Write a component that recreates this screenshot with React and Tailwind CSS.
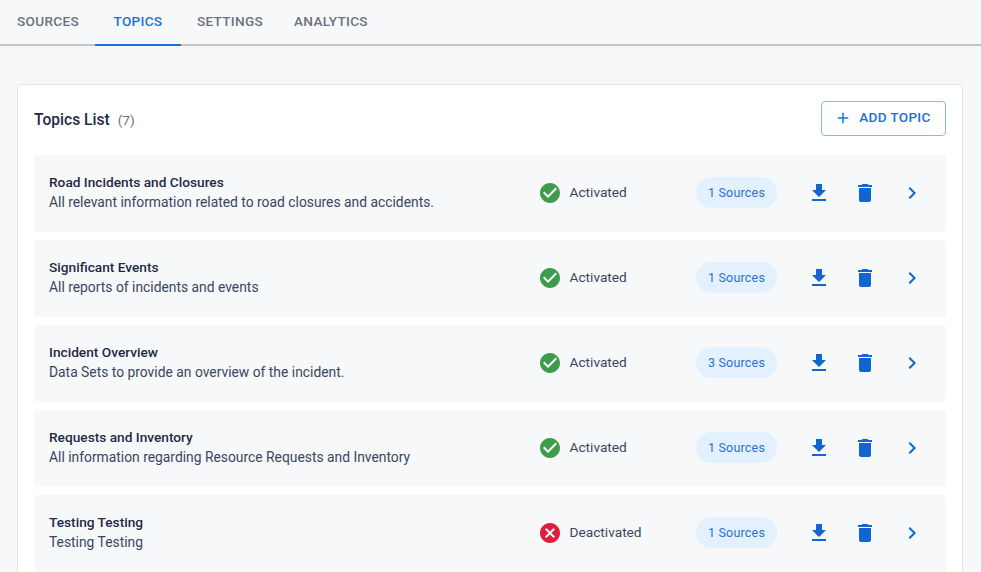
import React from 'react';

const tabs = [
  { label: 'SOURCES', className: 'px-[16px]' },
  { label: 'TOPICS', className: 'w-[86px]' },
  { label: 'SETTINGS', className: 'pl-[16px] pr-[16px]' },
  { label: 'ANALYTICS', className: 'px-[15px]' },
];

const topics = [
  { name: 'Road Incidents and Closures', desc: 'All relevant information related to road closures and accidents.', active: true, sources: 1 },
  { name: 'Significant Events', desc: 'All reports of incidents and events', active: true, sources: 1 },
  { name: 'Incident Overview', desc: 'Data Sets to provide an overview of the incident.', active: true, sources: 3 },
  { name: 'Requests and Inventory', desc: 'All information regarding Resource Requests and Inventory', active: true, sources: 1 },
  { name: 'Testing Testing', desc: 'Testing Testing', active: false, sources: 1 },
];

const Icon = ({ d, className }) => (
  <svg viewBox="0 0 24 24" fill="currentColor" className={className}>
    <path d={d} />
  </svg>
);

const paths = {
  plus: 'M19 13h-6v6h-2v-6H5v-2h6V5h2v6h6v2z',
  download: 'M5 20h14v-2H5v2zM19 9h-4V3H9v6H5l7 7 7-7z',
  trash: 'M6 19c0 1.1.9 2 2 2h8c1.1 0 2-.9 2-2V7H6v12zM19 4h-3.5l-1-1h-5l-1 1H5v2h14V4z',
  chevron: 'M10 6L8.59 7.41 13.17 12l-4.58 4.59L10 18l6-6z',
  check: 'M12 2C6.48 2 2 6.48 2 12s4.48 10 10 10 10-4.48 10-10S17.52 2 12 2zm-2 15l-5-5 1.41-1.41L10 14.17l7.59-7.59L19 8l-9 9z',
  cancel: 'M12 2C6.47 2 2 6.47 2 12s4.47 10 10 10 10-4.47 10-10S17.53 2 12 2zm5 13.59L15.59 17 12 13.41 8.41 17 7 15.59 10.59 12 7 8.41 8.41 7 12 10.59 15.59 7 17 8.41 13.41 12 17 15.59z',
};

const TopicRow = ({ topic }) => (
  <div className="flex h-[77px] shrink-0 items-center rounded bg-[#f7f8fa] pb-[2px] pl-[15px]">
    <div className="w-[489px] shrink-0 pb-[1px]">
      <div className="mb-[1px] text-[13.7px] leading-[19px] font-medium text-[#1f2a44]">{topic.name}</div>
      <div className="text-[13.85px] leading-[19px] text-[#3a4660]">{topic.desc}</div>
    </div>
    <div className="flex w-[158px] shrink-0 items-center">
      {topic.active ? (
        <Icon d={paths.check} className="h-6 w-6 text-[#3f9c4a]" />
      ) : (
        <Icon d={paths.cancel} className="h-6 w-6 text-[#e01e3c]" />
      )}
      <span className="ml-[7.5px] text-[13.7px] text-[#3a4660]">{topic.active ? 'Activated' : 'Deactivated'}</span>
    </div>
    <div className="flex h-[31px] w-[81px] shrink-0 items-center justify-center rounded-full bg-[#e3f1fe] pt-[1px] text-[12.5px] tracking-[0.2px] text-[#2a72d0]">
      {topic.sources} Sources
    </div>
    <div className="ml-[30px] flex items-center text-[#0f66d0]">
      <Icon d={paths.download} className="h-6 w-6" />
      <Icon d={paths.trash} className="ml-[22px] h-6 w-6" />
      <Icon d={paths.chevron} className="ml-[23px] h-6 w-6" />
    </div>
  </div>
);

const App = () => {
  return (
    <div className="h-[572px] w-[981px] overflow-hidden bg-[#f7f8fa] font-['Roboto',sans-serif]">
      {/* Tabs */}
      <div className="flex h-[46px] items-stretch border-b-2 border-[#c4c6ca] pl-[1px]">
        {tabs.map((tab) => (
          <div
            key={tab.label}
            className={`-mb-[2px] flex items-center justify-center border-b-2 pb-[1px] text-[13.6px] font-medium tracking-[0.3px] ${tab.className} ${
              tab.label === 'TOPICS' ? 'border-[#1b6fd8] text-[#1b6fd8]' : 'border-transparent text-[#6b7280]'
            }`}
          >
            {tab.label}
          </div>
        ))}
      </div>

      {/* Topics card */}
      <div className="ml-[17px] mt-[38px] h-[600px] w-[946px] rounded border border-[#e1e4ea] bg-white px-[16px] pt-[16px]">
        <div className="flex h-[35px] items-center justify-between">
          <div className="flex items-baseline pt-[4px]">
            <span className="text-[15.6px] font-medium text-[#1f2a44]">Topics List</span>
            <span className="ml-[8px] text-[13.7px] text-[#6b7280]">(7)</span>
          </div>
          <button className="flex h-[35px] w-[125px] items-center justify-center rounded border border-[#85b8f2] pr-[2px] pb-[2px] text-[13.6px] font-medium tracking-[0.3px] text-[#1b6fd8]">
            <Icon d={paths.plus} className="mr-[7px] mt-[1px] h-[18px] w-[18px]" />
            ADD TOPIC
          </button>
        </div>
        <div className="mt-[19px] flex flex-col gap-[8px]">
          {topics.map((topic) => (
            <TopicRow key={topic.name} topic={topic} />
          ))}
        </div>
      </div>
    </div>
  );
};

export default App;
